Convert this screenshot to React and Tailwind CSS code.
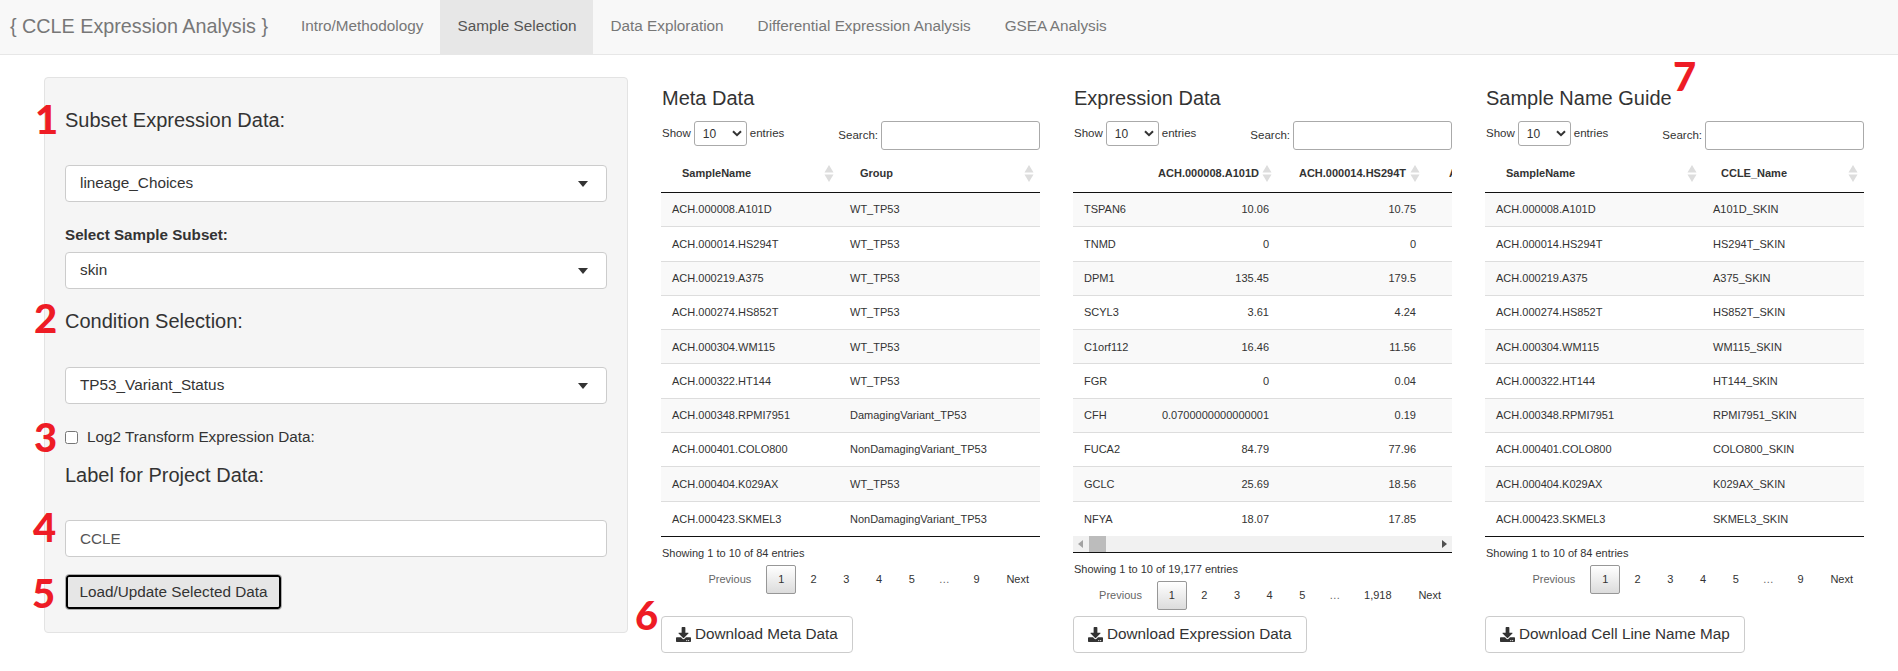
import { FaDownload } from 'react-icons/fa'

const sampleNames = [
  'ACH.000008.A101D', 'ACH.000014.HS294T', 'ACH.000219.A375', 'ACH.000274.HS852T', 'ACH.000304.WM115',
  'ACH.000322.HT144', 'ACH.000348.RPMI7951', 'ACH.000401.COLO800', 'ACH.000404.K029AX', 'ACH.000423.SKMEL3',
]
const groups = [
  'WT_TP53', 'WT_TP53', 'WT_TP53', 'WT_TP53', 'WT_TP53', 'WT_TP53',
  'DamagingVariant_TP53', 'NonDamagingVariant_TP53', 'WT_TP53', 'NonDamagingVariant_TP53',
]
const cellLines = [
  'A101D_SKIN', 'HS294T_SKIN', 'A375_SKIN', 'HS852T_SKIN', 'WM115_SKIN',
  'HT144_SKIN', 'RPMI7951_SKIN', 'COLO800_SKIN', 'K029AX_SKIN', 'SKMEL3_SKIN',
]
const expression = [
  ['TSPAN6', '10.06', '10.75'], ['TNMD', '0', '0'], ['DPM1', '135.45', '179.5'], ['SCYL3', '3.61', '4.24'],
  ['C1orf112', '16.46', '11.56'], ['FGR', '0', '0.04'], ['CFH', '0.0700000000000001', '0.19'],
  ['FUCA2', '84.79', '77.96'], ['GCLC', '25.69', '18.56'], ['NFYA', '18.07', '17.85'],
]

function Caret() {
  return (
    <svg width="10" height="6" viewBox="0 0 10 6" className="shrink-0">
      <path d="M0 0h10L5 6z" fill="#333" />
    </svg>
  )
}

function SelectBox({ value, className }) {
  return (
    <div className={`flex h-[37px] items-center justify-between rounded-[4px] border border-[#ccc] bg-white pl-[14px] pr-[18px] text-[15.3px] text-[#333] ${className ?? ''}`}>
      <span>{value}</span>
      <Caret />
    </div>
  )
}

function SortIcon() {
  return (
    <svg width="10" height="17" viewBox="0 0 10 17" className="shrink-0">
      <path d="M5 0l4.5 7.5h-9z" fill="#ddd" />
      <path d="M5 17L.5 9.500h9z" fill="#ddd" />
    </svg>
  )
}

function LengthMenu() {
  return (
    <div className="flex items-center gap-[3px]">
      <span>Show</span>
      <div className="flex h-[25px] w-[53px] items-center justify-between rounded-[3px] border border-[#aaa] bg-white pl-[8px] pr-[4px] text-[12px]">
        <span>10</span>
        <svg width="10" height="7" viewBox="0 0 10 7">
          <path d="M1 1.200l4 4 4-4" fill="none" stroke="#333" strokeWidth="2" />
        </svg>
      </div>
      <span>entries</span>
    </div>
  )
}

function TableControls() {
  return (
    <div className="mt-[10px] flex h-[29px] items-start justify-between pl-[1px] text-[11.5px] text-[#333]">
      <LengthMenu />
      <div className="flex items-center gap-[3px]">
        <span>Search:</span>
        <input className="h-[29px] w-[159px] rounded-[3px] border border-[#aaa] bg-white" />
      </div>
    </div>
  )
}

function TwoColTable({ col2Title, col2, col2Left, firstWidth }) {
  return (
    <div className="text-[11px] text-[#333]">
      <div className="mt-[9px] flex h-[29px]">
        <div style={{ width: firstWidth }} className="flex items-center justify-between pl-[21px] pr-[16px] font-bold">
          <span>SampleName</span>
          <SortIcon />
        </div>
        <div className="flex flex-1 items-center justify-between pr-[6px] font-bold" style={{ paddingLeft: col2Left }}>
          <span>{col2Title}</span>
          <SortIcon />
        </div>
      </div>
      <div className="mt-[4px] border-t border-b border-[#111]">
        {sampleNames.map((name, i) => (
          <div
            key={name}
            className={`flex h-[34.3px] items-center ${i % 2 === 0 ? 'bg-[#f9f9f9]' : 'bg-white'} ${i < 9 ? 'border-b border-[#ddd]' : ''}`}
          >
            <div style={{ width: firstWidth }} className="pl-[11px]">{name}</div>
            <div className="flex-1">{col2[i]}</div>
          </div>
        ))}
      </div>
    </div>
  )
}

function ExpressionTable() {
  return (
    <div className="text-[11px] text-[#333]">
      <div className="mt-[9px] flex h-[29px] overflow-hidden font-bold">
        <div className="w-[70px] shrink-0" />
        <div className="flex w-[129px] shrink-0 items-center justify-end gap-[3px]">
          <span>ACH.000008.A101D</span>
          <SortIcon />
        </div>
        <div className="flex w-[148px] shrink-0 items-center justify-end gap-[4px]">
          <span>ACH.000014.HS294T</span>
          <SortIcon />
        </div>
        <div className="ml-[29px] flex shrink-0 items-center">ACH.000219.A375</div>
      </div>
      <div className="mt-[4px] border-t border-[#111]">
        {expression.map((row, i) => (
          <div
            key={row[0]}
            className={`flex h-[34.3px] items-center ${i % 2 === 0 ? 'bg-[#f9f9f9]' : 'bg-white'} ${i < 9 ? 'border-b border-[#ddd]' : ''}`}
          >
            <div className="w-[70px] pl-[11px]">{row[0]}</div>
            <div className="w-[126px] text-right">{row[1]}</div>
            <div className="w-[147px] text-right">{row[2]}</div>
          </div>
        ))}
      </div>
      <div className="flex h-[17px] items-center justify-between border-b border-[#111] bg-[#f1f1f1] px-[5px]">
        <div className="flex items-center gap-[6px]">
          <svg width="5" height="8" viewBox="0 0 5 8"><path d="M5 0v8L0 4z" fill="#a3a3a3" /></svg>
          <div className="h-[16px] w-[17px] bg-[#bcbcbc]" />
        </div>
        <svg width="5" height="8" viewBox="0 0 5 8"><path d="M0 0v8l5-4z" fill="#505050" /></svg>
      </div>
    </div>
  )
}

function Pagination({ pages }) {
  return (
    <div className="mt-[5px] flex h-[29px] items-center justify-end pr-[11px] text-[11px] text-[#333]">
      <span className="mr-[15px] text-[#666]">Previous</span>
      <span className="flex h-[29px] w-[30px] items-center justify-center rounded-[2px] border border-[#979797] bg-gradient-to-b from-white to-[#dcdcdc]">1</span>
      {pages.map(page => (
        page === '…'
          ? <span key={page} className="ml-[2px] w-[30px] text-center text-[#666]">…</span>
          : <span key={page} className="ml-[2px] px-[12.3px]">{page}</span>
      ))}
      <span className="ml-[14.5px]">Next</span>
    </div>
  )
}

function DownloadButton({ label }) {
  return (
    <button className="mt-auto flex h-[37px] items-center gap-[4px] self-start rounded-[4px] border border-[#ccc] bg-white px-[14px] text-[15.3px] text-[#333]">
      <FaDownload className="text-[15px]" />
      {label}
    </button>
  )
}

function DataColumn({ title, children, info, pages, button }) {
  return (
    <section className="flex h-[598px] w-[379px] shrink-0 flex-col pt-[30px]">
      <h2 className="pl-[1px] text-[20px] leading-[26px] text-[#333]">{title}</h2>
      <TableControls />
      {children}
      <div className="mt-[9px] h-[14px] pl-[1px] text-[11px] leading-[14px] text-[#333]">{info}</div>
      <Pagination pages={pages} />
      <DownloadButton label={button} />
    </section>
  )
}

function Marker({ n, className }) {
  return (
    <span className={`absolute font-['Lato',sans-serif] text-[40px] font-black leading-none text-[#ee1c25] ${className}`}>{n}</span>
  )
}

export default function App() {
  return (
    <div className="relative h-[671px] overflow-hidden bg-white font-['Liberation_Sans',Arial,sans-serif] text-[#333]">
      <nav className="flex h-[55px] items-stretch border-b border-[#e7e7e7] bg-[#f8f8f8] text-[15.3px] text-[#777]">
        <div className="flex items-center pl-[10px] pr-[16px] text-[19.75px]">{'{ CCLE Expression Analysis }'}</div>
        <a className="flex items-center px-[17px] pb-[2px]">Intro/Methodology</a>
        <a className="flex items-center bg-[#e7e7e7] px-[17px] pb-[2px] text-[#555]">Sample Selection</a>
        <a className="flex items-center px-[17px] pb-[2px]">Data Exploration</a>
        <a className="flex items-center px-[17px] pb-[2px]">Differential Expression Analysis</a>
        <a className="flex items-center px-[17px] pb-[2px]">GSEA Analysis</a>
      </nav>

      <main className="flex items-start pl-[44px]">
        <aside className="mt-[22px] h-[556px] w-[584px] shrink-0 rounded-[4px] border border-[#e3e3e3] bg-[#f5f5f5] px-[20px]">
          <h3 className="mt-[31px] text-[20px] leading-[22px] text-[#333]">Subset Expression Data:</h3>
          <SelectBox value="lineage_Choices" className="mt-[34px]" />
          <div className="mt-[24px] text-[15.2px] font-bold leading-[18px]">Select Sample Subset:</div>
          <SelectBox value="skin" className="mt-[8px]" />
          <h3 className="mt-[21px] text-[20px] leading-[22px] text-[#333]">Condition Selection:</h3>
          <SelectBox value="TP53_Variant_Status" className="mt-[35px]" />
          <label className="mt-[27px] flex h-[13px] items-center gap-[9px] text-[15.3px]">
            <input type="checkbox" className="m-0 h-[13px] w-[13px]" />
            Log2 Transform Expression Data:
          </label>
          <h3 className="mt-[20px] text-[20px] leading-[22px] text-[#333]">Label for Project Data:</h3>
          <input readOnly value="CCLE" className="mt-[34px] block h-[37px] w-full rounded-[4px] border border-[#ccc] bg-white px-[14px] text-[15.3px] text-[#555]" />
          <button className="mt-[17px] flex h-[36px] w-[217px] items-center justify-center rounded-[4px] border border-[#adadad] bg-[#e6e6e6] text-[15.3px] text-[#333] shadow-[inset_0_0_0_2px_#000]">
            Load/Update Selected Data
          </button>
        </aside>

        <div className="ml-[33px] flex gap-[33px]">
          <DataColumn
            title="Meta Data"
            info="Showing 1 to 10 of 84 entries"
            pages={['2', '3', '4', '5', '…', '9']}
            button="Download Meta Data"
          >
            <TwoColTable col2Title="Group" col2={groups} col2Left="10px" firstWidth="189px" />
          </DataColumn>
          <DataColumn
            title="Expression Data"
            info="Showing 1 to 10 of 19,177 entries"
            pages={['2', '3', '4', '5', '…', '1,918']}
            button="Download Expression Data"
          >
            <ExpressionTable />
          </DataColumn>
          <DataColumn
            title="Sample Name Guide"
            info="Showing 1 to 10 of 84 entries"
            pages={['2', '3', '4', '5', '…', '9']}
            button="Download Cell Line Name Map"
          >
            <TwoColTable col2Title="CCLE_Name" col2={cellLines} col2Left="8px" firstWidth="228px" />
          </DataColumn>
        </div>
      </main>

      <Marker n="1" className="left-[35px] top-[99px]" />
      <Marker n="2" className="left-[34px] top-[298px]" />
      <Marker n="3" className="left-[34px] top-[417px]" />
      <Marker n="4" className="left-[33px] top-[507px]" />
      <Marker n="5" className="left-[32px] top-[573px]" />
      <Marker n="6" className="left-[635px] top-[595px]" />
      <Marker n="7" className="left-[1673px] top-[56px]" />
    </div>
  )
}
